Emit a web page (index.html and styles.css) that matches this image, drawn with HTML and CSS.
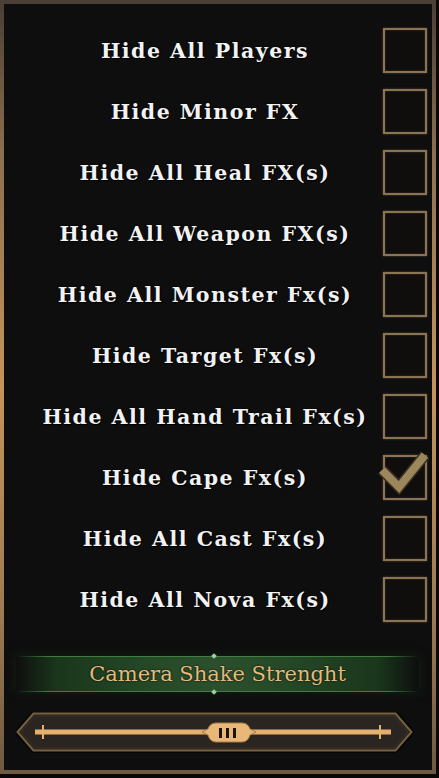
FILE: index.html
```html
<!DOCTYPE html>
<html>
<head>
<meta charset="utf-8">
<link rel="stylesheet" href="styles.css">
</head>
<body>
<div class="frame">
  <div class="list">
    <div class="row"><span class="label">Hide All Players</span><span class="box"></span></div>
    <div class="row"><span class="label">Hide Minor FX</span><span class="box"></span></div>
    <div class="row"><span class="label">Hide All Heal FX(s)</span><span class="box"></span></div>
    <div class="row"><span class="label">Hide All Weapon FX(s)</span><span class="box"></span></div>
    <div class="row"><span class="label">Hide All Monster Fx(s)</span><span class="box"></span></div>
    <div class="row"><span class="label">Hide Target Fx(s)</span><span class="box"></span></div>
    <div class="row"><span class="label">Hide All Hand Trail Fx(s)</span><span class="box"></span></div>
    <div class="row"><span class="label">Hide Cape Fx(s)</span><span class="box checked"><svg class="tick" width="56" height="52" viewBox="-6 -8 56 52"><polyline points="-1,15 16,32 42,0" fill="none" stroke="#3b2f1f" stroke-width="11" stroke-linejoin="miter"/><polyline points="-1,15 16,32 42,0" fill="none" stroke="#9c875c" stroke-width="8" stroke-linejoin="miter"/></svg></span></div>
    <div class="row"><span class="label">Hide All Cast Fx(s)</span><span class="box"></span></div>
    <div class="row"><span class="label">Hide All Nova Fx(s)</span><span class="box"></span></div>
  </div>
  <div class="banner">
    <span class="stud top"></span>
    <span class="banner-text">Camera Shake Strenght</span>
    <span class="stud bottom"></span>
  </div>
  <div class="slider">
    <svg width="398" height="41" viewBox="0 0 398 41">
      <polygon points="0,20 17,1 380,1 397,20 380,39 17,39" fill="#0a0908" stroke="#050404" stroke-width="4" opacity="0.6"/>
      <polygon points="1.5,20 17.5,1.5 379.5,1.5 395.5,20 379.5,38.5 17.5,38.5" fill="#2a2520" stroke="#75603f" stroke-width="2"/>
      <polygon points="5,20 19,4 378,4 392,20 378,36 19,36" fill="none" stroke="#3a3026" stroke-width="1"/>
      <rect x="19" y="17.5" width="356" height="5" fill="#e4b070"/>
      <rect x="26" y="13" width="2" height="14" fill="#e4b070"/>
      <rect x="363" y="13" width="2" height="14" fill="#e4b070"/>
      <path d="M186,20 L192,17 Q194,11 200,11 L226,11 Q232,11 234,17 L240,20 L234,23 Q232,30 226,30 L200,30 Q194,30 192,23 Z" fill="#e8b878" stroke="#a87c48" stroke-width="1"/>
      <rect x="203" y="16" width="3" height="10" fill="#1c140d"/>
      <rect x="210" y="16" width="3" height="10" fill="#1c140d"/>
      <rect x="217" y="16" width="3" height="10" fill="#1c140d"/>
    </svg>
  </div>
</div>
</body>
</html>
```
FILE: styles.css
```css
html, body {
  margin: 0;
  padding: 0;
  background: #090807;
}
body {
  width: 439px;
  height: 778px;
  overflow: hidden;
}
.frame {
  box-sizing: border-box;
  width: 436px;
  height: 774px;
  border: 4px solid #7a6448;
  border-image: linear-gradient(to bottom, #4a3f35 0%, #8c7050 20%, #c4955a 50%, #9c7a52 80%, #6e5a42 100%) 1;
  background: #0e0e0e;
  display: flex;
  flex-direction: column;
}
.list {
  padding-top: 16px;
  display: flex;
  flex-direction: column;
}
.row {
  height: 61px;
  display: flex;
  align-items: center;
  padding-left: 26px;
  padding-right: 5px;
  gap: 3px;
}
.label {
  flex: 1;
  text-align: center;
  font-family: "DejaVu Serif", serif;
  font-weight: bold;
  font-size: 20.5px;
  letter-spacing: 1.5px;
  color: #f2f2f2;
  text-shadow: 0 0 2px #000, 1px 1px 0 #000;
  white-space: nowrap;
}
.box {
  position: relative;
  box-sizing: border-box;
  width: 44px;
  height: 45px;
  border: 2px solid #8a7454;
  box-shadow: 0 0 2px rgba(160, 130, 90, 0.5), inset 0 0 2px rgba(160, 130, 90, 0.4);
  background: #0f0e0d;
}
.tick {
  position: absolute;
  left: -8px;
  top: -10px;
}
.banner {
  position: relative;
  margin: 26px 13px 0 12px;
  height: 36px;
  display: flex;
  align-items: center;
  justify-content: center;
  background:
    linear-gradient(to right, rgba(70,130,70,0) 0%, rgba(70,130,70,0.9) 8%, rgba(70,130,70,0.9) 92%, rgba(70,130,70,0) 100%) top / 100% 1px no-repeat,
    linear-gradient(to right, rgba(70,130,70,0) 0%, rgba(70,130,70,0.9) 8%, rgba(70,130,70,0.9) 92%, rgba(70,130,70,0) 100%) bottom / 100% 1px no-repeat,
    linear-gradient(to right, rgba(22,44,22,0) 0%, #1a361c 10%, #264a28 35%, #2c4f2d 50%, #264a28 65%, #1a361c 90%, rgba(22,44,22,0) 100%);
  box-shadow: 0 0 10px rgba(30, 70, 30, 0.35);
}
.banner-text {
  font-family: "DejaVu Serif", serif;
  font-size: 21px;
  color: #e4ba78;
  text-shadow: 0 0 2px #000;
}
.stud {
  position: absolute;
  left: 196px;
  width: 4px;
  height: 4px;
  background: #9cd09c;
  transform: rotate(45deg);
}
.stud.top { top: -2px; }
.stud.bottom { bottom: -2px; }
.slider {
  margin: 20px 0 0 12px;
  height: 41px;
  line-height: 0;
}
```
